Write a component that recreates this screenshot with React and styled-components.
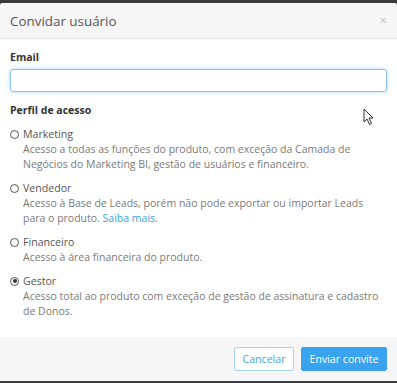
import React, { useState } from "react";
import styled, { createGlobalStyle } from "styled-components";

const GlobalStyle = createGlobalStyle`
  html, body {
    margin: 0;
    padding: 0;
    background: #3a3b3d;
    font-family: "Open Sans", "Noto Sans", sans-serif;
  }
`;

const perfis = [
  {
    id: "marketing",
    nome: "Marketing",
    texto:
      "Acesso a todas as funções do produto, com exceção da Camada de Negócios do Marketing BI, gestão de usuários e financeiro.",
  },
  {
    id: "vendedor",
    nome: "Vendedor",
    texto:
      "Acesso à Base de Leads, porém não pode exportar ou importar Leads para o produto.",
    link: true,
  },
  {
    id: "financeiro",
    nome: "Financeiro",
    texto: "Acesso à área financeira do produto.",
  },
  {
    id: "gestor",
    nome: "Gestor",
    texto:
      "Acesso total ao produto com exceção de gestão de assinatura e cadastro de Donos.",
  },
];

function App() {
  const [perfil, setPerfil] = useState("gestor");

  return (
    <>
      <GlobalStyle />
      <Backdrop>
        <Modal>
          <Header>
            <Title>Convidar usuário</Title>
            <Close>×</Close>
          </Header>
          <Body>
            <Label>Email</Label>
            <Input type="text" />
            <Label $top={10}>Perfil de acesso</Label>
            <Options>
              {perfis.map((p) => (
                <Option key={p.id} onClick={() => setPerfil(p.id)}>
                  <OptionHead>
                    <Radio $checked={perfil === p.id} />
                    <OptionName>{p.nome}</OptionName>
                  </OptionHead>
                  <Description>
                    {p.texto}
                    {p.link && (
                      <>
                        {" "}
                        <Link href="#">Saiba mais</Link>.
                      </>
                    )}
                  </Description>
                </Option>
              ))}
            </Options>
          </Body>
          <Footer>
            <Button $w={60}>Cancelar</Button>
            <Button $primary $w={86}>Enviar convite</Button>
          </Footer>
          <Cursor width="12" height="18" viewBox="0 0 12 18">
            <path
              d="M1 1 L1 14 L4 11 L6.5 16.5 L8.5 15.5 L6 10 L10 10 Z"
              fill="#fff"
              stroke="#333"
              strokeWidth="1"
              strokeLinejoin="round"
            />
          </Cursor>
        </Modal>
      </Backdrop>
    </>
  );
}

export default App;

const Backdrop = styled.div`
  height: 383px;
  padding-top: 3px;
  box-sizing: border-box;
`;

const Modal = styled.div`
  position: relative;
  background: #fff;
  height: 378px;
  display: flex;
  flex-direction: column;
  border-radius: 3px 3px 0 0;
  overflow: hidden;
`;

const Header = styled.div`
  display: flex;
  align-items: center;
  justify-content: space-between;
  height: 35px;
  padding: 0 10px;
  background: #f6f6f7;
  border-bottom: 1px solid #e6e6e6;
`;

const Title = styled.h3`
  margin: 0;
  font-size: 13.4px;
  font-weight: 400;
  color: #555;
`;

const Close = styled.span`
  font-size: 13px;
  color: #c4c4c4;
  line-height: 1;
`;

const Body = styled.div`
  flex: 1;
  padding: 10px 10px 0;
`;

const Label = styled.div`
  margin-top: ${(p) => p.$top || 0}px;
  font-size: 10.5px;
  font-weight: 700;
  color: #333;
  line-height: 16px;
`;

const Input = styled.input`
  display: block;
  box-sizing: border-box;
  width: 100%;
  height: 23px;
  margin-top: 4px;
  border: 1px solid #8fc2ea;
  border-radius: 3px;
  box-shadow: 0 0 4px rgba(102, 175, 233, 0.5);
  outline: none;
`;

const Options = styled.div`
  display: flex;
  flex-direction: column;
  gap: 8px;
  margin-top: 8px;
`;

const Option = styled.div`
  cursor: pointer;
`;

const OptionHead = styled.div`
  display: flex;
  align-items: center;
  gap: 4px;
  height: 16px;
`;

const Radio = styled.span`
  box-sizing: border-box;
  width: 9px;
  height: 9px;
  border: 1px solid #555;
  border-radius: 50%;
  position: relative;
  &::after {
    content: "";
    display: ${(p) => (p.$checked ? "block" : "none")};
    position: absolute;
    left: 1.5px;
    top: 1.5px;
    width: 4px;
    height: 4px;
    border-radius: 50%;
    background: #333;
  }
`;

const OptionName = styled.span`
  font-size: 10.6px;
  color: #555;
`;

const Description = styled.div`
  padding-left: 13px;
  font-size: 10.5px;
  line-height: 15px;
  color: #7a7a7a;
`;

const Link = styled.a`
  color: #3aa3e3;
  text-decoration: none;
`;

const Footer = styled.div`
  display: flex;
  justify-content: flex-end;
  align-items: center;
  gap: 7px;
  height: 44px;
  padding: 0 10px;
  background: #f6f6f7;
`;

const Button = styled.button`
  width: ${(p) => p.$w}px;
  height: 24px;
  padding: 0;
  font-family: "Open Sans", sans-serif;
  font-size: 10.6px;
  border-radius: 2px;
  border: 1px solid ${(p) => (p.$primary ? "#3aa3f0" : "#a9d2ef")};
  background: ${(p) => (p.$primary ? "#3aa3f0" : "#fff")};
  color: ${(p) => (p.$primary ? "#fff" : "#4ba3dc")};
  cursor: pointer;
`;

const Cursor = styled.svg`
  position: absolute;
  left: 363px;
  top: 105px;
`;
